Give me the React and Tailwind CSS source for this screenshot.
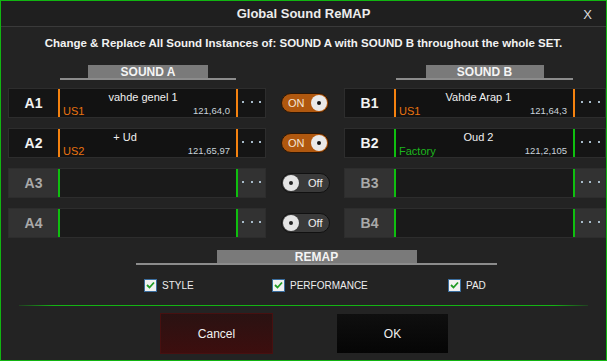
import React from "react";

const FONT = { fontFamily: '"Liberation Sans", Arial, sans-serif' };

function Dots() {
  return (
    <div className="flex items-center justify-center gap-[6.5px] -mt-[2px]">
      <span className="w-[2px] h-[2px] bg-[#a8bccb]" />
      <span className="w-[2px] h-[2px] bg-[#a8bccb]" />
      <span className="w-[2px] h-[2px] bg-[#a8bccb]" />
    </div>
  );
}

function Row({ label, active, name, bank, code, barColor, bankColor, nameShift = 10, side }) {
  const isA = side === "A";
  return (
    <div
      className={`flex h-[30px] border border-[#2d2d2d] bg-[#151515] ${isA ? "w-[258px]" : "flex-1"}`}
    >
      <div
        className={`w-[49px] flex items-center justify-center text-[14px] font-bold ${
          active ? "text-[#f2f2f2] bg-[#151515]" : "text-[#a9a9a9] bg-[#323232]"
        }`}
      >
        {label}
      </div>
      <div className="w-[2px]" style={{ background: barColor }} />
      <div className={`${isA ? "w-[176px]" : "flex-1"} flex flex-col ${active ? "bg-[#121212]" : "bg-[#1a1a1a]"}`}>
        {active && (
          <>
            <div
              className="h-[13px] mt-[2px] text-[11px] leading-[13px] text-[#f0f0f0] text-center"
              style={{ paddingRight: nameShift }}
            >
              {name}
            </div>
            <div className="flex items-center justify-between h-[12px] mt-[1px] pl-[3px] pr-[6px]">
              <span className="text-[11px] leading-[12px]" style={{ color: bankColor }}>
                {bank}
              </span>
              <span className="text-[9.5px] leading-[12px] text-[#c9d2da]">{code}</span>
            </div>
          </>
        )}
      </div>
      <div className="w-[2px]" style={{ background: barColor }} />
      <div
        className={`${isA ? "w-[27px]" : "w-[30px]"} flex items-center justify-center ${
          active ? "bg-[#151515]" : "bg-[#323232]"
        }`}
      >
        <Dots />
      </div>
    </div>
  );
}

function Toggle({ on }) {
  if (on) {
    return (
      <div className="w-[48px] h-[20px] rounded-full bg-[#b0580f] border border-[#2b1605] flex items-center justify-between pl-[6px] pr-[1px]">
        <span className="text-[11px] text-[#f5e6d6] leading-none">ON</span>
        <span className="w-[16px] h-[16px] rounded-full bg-[#e9e9e9] flex items-center justify-center">
          <span className="w-[4px] h-[4px] rounded-full bg-[#111]" />
        </span>
      </div>
    );
  }
  return (
    <div className="w-[49px] h-[20px] rounded-full bg-[#3a3a3a] border border-[#111] flex items-center pl-[1px] pr-[6px] justify-between">
      <span className="w-[16px] h-[16px] rounded-full bg-[#e4e4e4] flex items-center justify-center">
        <span className="w-[4px] h-[4px] rounded-full bg-[#222]" />
      </span>
      <span className="text-[11px] text-[#f0f0f0] leading-none">Off</span>
    </div>
  );
}

function Check({ label, width }) {
  return (
    <div className="flex items-center" style={{ width }}>
      <span className="w-[13px] h-[13px] border border-[#3a6d9e] bg-[#f1f1f1] flex items-center justify-center">
        <svg width="9" height="8" viewBox="0 0 9 8">
          <path d="M1 4 L3.5 6.5 L8 1.5" stroke="#1f9b24" strokeWidth="1.8" fill="none" />
        </svg>
      </span>
      <span className="ml-[5px] text-[10px] text-[#eeeeee]">{label}</span>
    </div>
  );
}

function SectionHeader({ title, width, boxWidth }) {
  return (
    <div className="flex flex-col items-center" style={{ width }}>
      <div
        className="h-[13px] bg-[#7a7a7a] flex items-center justify-center text-[12px] font-bold text-[#f4f4f4] leading-none"
        style={{ width: boxWidth }}
      >
        {title}
      </div>
      <div className="h-[2px] w-full bg-[#8c8c8c]" />
    </div>
  );
}

export default function App() {
  const orange = "#f5820f";
  const green = "#0fbf0f";
  return (
    <div
      className="w-[607px] h-[361px] bg-[#232323] border border-[#11b511] flex flex-col overflow-hidden"
      style={FONT}
    >
      <div className="h-[26px] shrink-0 relative flex items-center justify-center bg-[#1f1f1f] border-b border-[#3a3a3a]">
        <span className="text-[13px] font-bold text-[#ececec]">Global Sound ReMAP</span>
        <span className="absolute right-[14px] top-[4px] text-[13px] text-[#dcdcdc]">X</span>
      </div>

      <div className="mt-[10px] h-[13px] text-center text-[11.5px] font-bold leading-[13px] text-[#f2f2f2]">
        Change &amp; Replace All Sound Instances of: SOUND A with SOUND B throughout the whole SET.
      </div>

      <div className="flex mt-[15px]">
        <div className="ml-[59px]">
          <SectionHeader title="SOUND A" width={176} boxWidth={120} />
        </div>
        <div className="ml-[160px]">
          <SectionHeader title="SOUND B" width={177} boxWidth={118} />
        </div>
      </div>

      <div className="flex flex-col gap-[10px] mt-[8px] pl-[7px]">
        <div className="flex items-center">
          <Row side="A" label="A1" active name="vahde genel 1" bank="US1" code="121,64,0" barColor={orange} bankColor="#ea7310" />
          <div className="w-[78px] flex justify-center"><Toggle on /></div>
          <Row side="B" label="B1" active name="Vahde Arap 1" bank="US1" code="121,64,3" barColor={orange} bankColor="#ea7310" nameShift={12} />
        </div>
        <div className="flex items-center">
          <Row side="A" label="A2" active name="+ Ud" bank="US2" code="121,65,97" barColor={orange} bankColor="#ea7310" nameShift={46} />
          <div className="w-[78px] flex justify-center"><Toggle on /></div>
          <Row side="B" label="B2" active name="Oud 2" bank="Factory" code="121,2,105" barColor={green} bankColor="#1db51d" nameShift={12} />
        </div>
        <div className="flex items-center">
          <Row side="A" label="A3" barColor={green} />
          <div className="w-[78px] flex justify-center"><Toggle /></div>
          <Row side="B" label="B3" barColor={green} />
        </div>
        <div className="flex items-center">
          <Row side="A" label="A4" barColor={green} />
          <div className="w-[78px] flex justify-center"><Toggle /></div>
          <Row side="B" label="B4" barColor={green} />
        </div>
      </div>

      <div className="flex mt-[12px] ml-[135px]">
        <SectionHeader title="REMAP" width={361} boxWidth={200} />
      </div>

      <div className="flex mt-[13px] ml-[143px] h-[14px] items-center">
        <Check label="STYLE" width={128} />
        <Check label="PERFORMANCE" width={176} />
        <Check label="PAD" width={80} />
      </div>

      <div className="mt-[13px] mx-[18px] h-[1px] bg-[linear-gradient(90deg,rgba(20,180,20,0.2),#14b414_6%,#14b414_94%,rgba(20,180,20,0.2))]" />

      <div className="flex mt-[7px] ml-[159px] items-start">
        <button className="w-[113px] h-[41px] border border-[#471010] bg-[linear-gradient(180deg,#2a1212,#3d0e0e)] text-[12px] text-[#f0f0f0]">
          Cancel
        </button>
        <button className="ml-[64px] mt-[1px] w-[111px] h-[39px] bg-[linear-gradient(180deg,#0f0f0f,#050505)] text-[12px] text-[#f0f0f0]">
          OK
        </button>
      </div>
    </div>
  );
}
